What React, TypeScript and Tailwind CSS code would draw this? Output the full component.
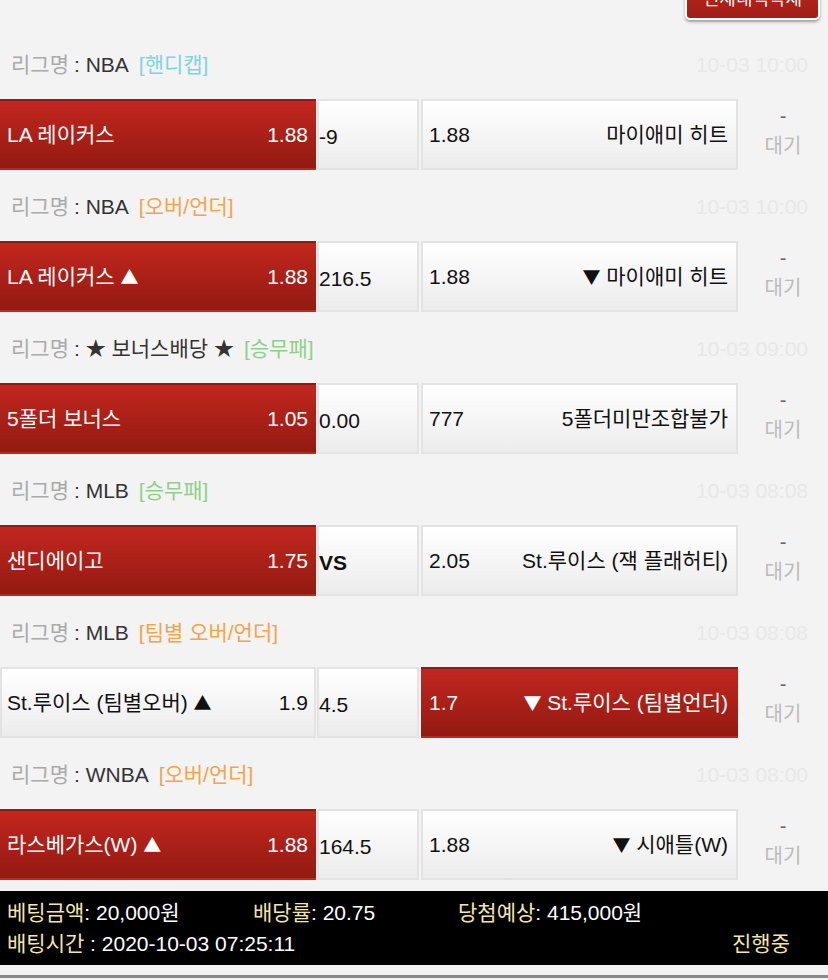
import React from "react";

type Row = {
  league: React.ReactNode;
  tag: string;
  tagColor: string;
  date: string;
  home: React.ReactNode;
  homeOdds: string;
  hc: string;
  hcBold?: boolean;
  awayOdds: string;
  away: React.ReactNode;
  pick: "home" | "away";
};

const G = ({ c }: { c: string }) => (
  <span className="text-[18px]" style={{ fontFamily: '"Noto Sans CJK KR", "DejaVu Sans", sans-serif' }}>{c}</span>
);
const S = ({ c }: { c: string }) => (
  <span className="text-[20px]" style={{ fontFamily: '"Noto Sans CJK KR", "DejaVu Sans", sans-serif' }}>{c}</span>
);

const rows: Row[] = [
  { league: "NBA", tag: "[핸디캡]", tagColor: "text-[#7dd6dc]", date: "10-03 10:00", home: "LA 레이커스", homeOdds: "1.88", hc: "-9", awayOdds: "1.88", away: "마이애미 히트", pick: "home" },
  { league: "NBA", tag: "[오버/언더]", tagColor: "text-[#f2a54a]", date: "10-03 10:00", home: <>LA 레이커스 <G c="▲" /></>, homeOdds: "1.88", hc: "216.5", awayOdds: "1.88", away: <><G c="▼" /> 마이애미 히트</>, pick: "home" },
  { league: <><S c="★" /> 보너스배당 <S c="★" /></>, tag: "[승무패]", tagColor: "text-[#8fd08a]", date: "10-03 09:00", home: "5폴더 보너스", homeOdds: "1.05", hc: "0.00", awayOdds: "777", away: "5폴더미만조합불가", pick: "home" },
  { league: "MLB", tag: "[승무패]", tagColor: "text-[#8fd08a]", date: "10-03 08:08", home: "샌디에이고", homeOdds: "1.75", hc: "VS", hcBold: true, awayOdds: "2.05", away: "St.루이스 (잭 플래허티)", pick: "home" },
  { league: "MLB", tag: "[팀별 오버/언더]", tagColor: "text-[#f2a54a]", date: "10-03 08:08", home: <>St.루이스 (팀별오버) <G c="▲" /></>, homeOdds: "1.9", hc: "4.5", awayOdds: "1.7", away: <><G c="▼" /> St.루이스 (팀별언더)</>, pick: "away" },
  { league: "WNBA", tag: "[오버/언더]", tagColor: "text-[#f2a54a]", date: "10-03 08:00", home: <>라스베가스(W) <G c="▲" /></>, homeOdds: "1.88", hc: "164.5", awayOdds: "1.88", away: <><G c="▼" /> 시애틀(W)</>, pick: "home" },
];

const redBox = "bg-gradient-to-b from-[#c2271e] to-[#931a12] text-white border-2 border-transparent";
const whiteBox = "bg-gradient-to-b from-[#ffffff] to-[#ececec] text-[#111] border-2 border-[#e3e3e3]";

export default function App() {
  return (
    <div
      className="w-[828px] h-[980px] overflow-hidden bg-[#f3f3f3] relative"
      style={{ fontFamily: '"Liberation Sans", "Noto Sans CJK KR", Arial, sans-serif' }}
    >
      <div className="h-[28px] relative">
        <div className="absolute right-[8px] top-[-22px] w-[135px] h-[42px] rounded-b-[5px] bg-gradient-to-b from-[#c2271e] to-[#a01d16] border-2 border-white shadow-[0_2px_3px_rgba(0,0,0,0.35)] flex items-center justify-center text-white text-[18px] leading-none">
          전체내역삭제
        </div>
      </div>
      {rows.map((r, i) => (
        <div key={i}>
          <div className="h-[71px] flex items-center justify-between pt-[2px] pl-[11px] pr-[20px] text-[21px]">
            <div className="flex items-center">
              <span className="text-[#aaaaaa]">리그명</span>
              <span className="text-[#333] ml-[5px]">: {r.league}</span>
              <span className={`${r.tagColor} ml-[10px]`}>{r.tag}</span>
            </div>
            <div className="text-[#e8e8e8]">{r.date}</div>
          </div>
          <div className="h-[71px] flex text-[21px]">
            <div className={`w-[316px] h-full flex items-center justify-between pl-[5px] pr-[6px] ${r.pick === "home" ? redBox : whiteBox}`}>
              <span>{r.home}</span>
              <span>{r.homeOdds}</span>
            </div>
            <div className={`w-[102px] h-full ml-[1px] flex items-center pt-[4px] pl-[0px] ${whiteBox} ${r.hcBold ? "font-bold" : ""}`}>
              {r.hc}
            </div>
            <div className={`w-[317px] h-full ml-[2px] flex items-center justify-between pl-[6px] pr-[8px] ${r.pick === "away" ? redBox : whiteBox}`}>
              <span>{r.awayOdds}</span>
              <span>{r.away}</span>
            </div>
            <div className="flex-1 h-full flex flex-col items-center pt-[2px] text-[20px] leading-[30px]">
              <span className="text-[#666]">-</span>
              <span className="text-[#bbbbbb]">대기</span>
            </div>
          </div>
        </div>
      ))}
      <div className="mt-[11px] h-[74px] bg-black py-[6px] pl-[7px] pr-[38px] text-[21px] leading-[31px] text-white">
        <div className="flex">
          <div className="w-[246px]"><span className="text-[#f3e7a6]">베팅금액</span>: 20,000원</div>
          <div className="w-[205px]"><span className="text-[#f3e7a6]">배당률</span>: 20.75</div>
          <div><span className="text-[#f3e7a6]">당첨예상</span>: 415,000원</div>
        </div>
        <div className="flex justify-between">
          <div><span className="text-[#f3e7a6]">배팅시간</span> : 2020-10-03 07:25:11</div>
          <div className="text-[#f3e7a6]">진행중</div>
        </div>
      </div>
      <div className="mt-[10px] h-[3px] bg-[#8a8a8a]" />
    </div>
  );
}
